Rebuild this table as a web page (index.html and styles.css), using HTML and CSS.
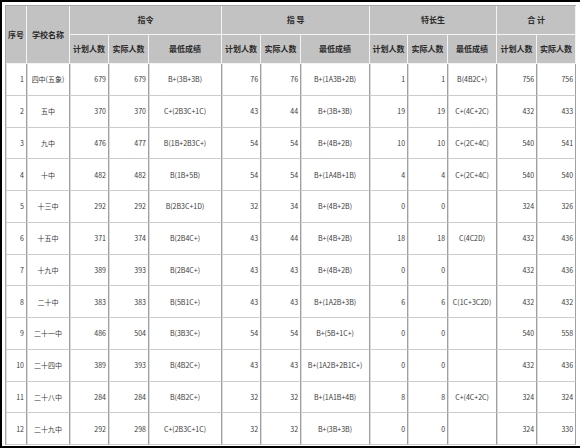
FILE: index.html
```html
<!DOCTYPE html>
<html lang="zh-CN">
<head>
<meta charset="utf-8">
<title>招生统计</title>
<link rel="stylesheet" href="styles.css">
</head>
<body>
<div class="frame">
<table class="grid">
<colgroup>
<col class="c-no"><col class="c-name">
<col class="c-n1"><col class="c-n2"><col class="c-s1">
<col class="c-n3"><col class="c-n4"><col class="c-s2">
<col class="c-n5"><col class="c-n6"><col class="c-s3">
<col class="c-n7"><col class="c-n8">
</colgroup>
<thead>
<tr class="h1">
<th rowspan="2">序号</th><th rowspan="2">学校名称</th>
<th colspan="3">指令</th><th colspan="3">指 导</th><th colspan="3">特长生</th><th colspan="2">合 计</th>
</tr>
<tr class="h2">
<th>计划人数</th><th>实际人数</th><th>最低成绩</th>
<th>计划人数</th><th>实际人数</th><th>最低成绩</th>
<th>计划人数</th><th>实际人数</th><th>最低成绩</th>
<th>计划人数</th><th>实际人数</th>
</tr>
</thead>
<tbody>
<tr><td class="r">1</td><td class="m">四中(五象)</td><td class="r">679</td><td class="r">679</td><td class="m">B+(3B+3B)</td><td class="r">76</td><td class="r">76</td><td class="m">B+(1A3B+2B)</td><td class="r">1</td><td class="r">1</td><td class="m">B(4B2C+)</td><td class="r">756</td><td class="r">756</td></tr>
<tr><td class="r">2</td><td class="m">五中</td><td class="r">370</td><td class="r">370</td><td class="m">C+(2B3C+1C)</td><td class="r">43</td><td class="r">44</td><td class="m">B+(3B+3B)</td><td class="r">19</td><td class="r">19</td><td class="m">C+(4C+2C)</td><td class="r">432</td><td class="r">433</td></tr>
<tr><td class="r">3</td><td class="m">九中</td><td class="r">476</td><td class="r">477</td><td class="m">B(1B+2B3C+)</td><td class="r">54</td><td class="r">54</td><td class="m">B+(4B+2B)</td><td class="r">10</td><td class="r">10</td><td class="m">C+(2C+4C)</td><td class="r">540</td><td class="r">541</td></tr>
<tr><td class="r">4</td><td class="m">十中</td><td class="r">482</td><td class="r">482</td><td class="m">B(1B+5B)</td><td class="r">54</td><td class="r">54</td><td class="m">B+(1A4B+1B)</td><td class="r">4</td><td class="r">4</td><td class="m">C+(2C+4C)</td><td class="r">540</td><td class="r">540</td></tr>
<tr><td class="r">5</td><td class="m">十三中</td><td class="r">292</td><td class="r">292</td><td class="m">B(2B3C+1D)</td><td class="r">32</td><td class="r">34</td><td class="m">B+(4B+2B)</td><td class="r">0</td><td class="r">0</td><td class="m"></td><td class="r">324</td><td class="r">326</td></tr>
<tr><td class="r">6</td><td class="m">十五中</td><td class="r">371</td><td class="r">374</td><td class="m">B(2B4C+)</td><td class="r">43</td><td class="r">44</td><td class="m">B+(4B+2B)</td><td class="r">18</td><td class="r">18</td><td class="m">C(4C2D)</td><td class="r">432</td><td class="r">436</td></tr>
<tr><td class="r">7</td><td class="m">十九中</td><td class="r">389</td><td class="r">393</td><td class="m">B(2B4C+)</td><td class="r">43</td><td class="r">43</td><td class="m">B+(4B+2B)</td><td class="r">0</td><td class="r">0</td><td class="m"></td><td class="r">432</td><td class="r">436</td></tr>
<tr><td class="r">8</td><td class="m">二十中</td><td class="r">383</td><td class="r">383</td><td class="m">B(5B1C+)</td><td class="r">43</td><td class="r">43</td><td class="m">B+(1A2B+3B)</td><td class="r">6</td><td class="r">6</td><td class="m">C(1C+3C2D)</td><td class="r">432</td><td class="r">432</td></tr>
<tr><td class="r">9</td><td class="m">二十一中</td><td class="r">486</td><td class="r">504</td><td class="m">B(3B3C+)</td><td class="r">54</td><td class="r">54</td><td class="m">B+(5B+1C+)</td><td class="r">0</td><td class="r">0</td><td class="m"></td><td class="r">540</td><td class="r">558</td></tr>
<tr><td class="r">10</td><td class="m">二十四中</td><td class="r">389</td><td class="r">393</td><td class="m">B(4B2C+)</td><td class="r">43</td><td class="r">43</td><td class="m">B+(1A2B+2B1C+)</td><td class="r">0</td><td class="r">0</td><td class="m"></td><td class="r">432</td><td class="r">436</td></tr>
<tr><td class="r">11</td><td class="m">二十八中</td><td class="r">284</td><td class="r">284</td><td class="m">B(4B2C+)</td><td class="r">32</td><td class="r">32</td><td class="m">B+(1A1B+4B)</td><td class="r">8</td><td class="r">8</td><td class="m">C+(4C+2C)</td><td class="r">324</td><td class="r">324</td></tr>
<tr><td class="r">12</td><td class="m">二十九中</td><td class="r">292</td><td class="r">298</td><td class="m">C+(2B3C+1C)</td><td class="r">32</td><td class="r">32</td><td class="m">B+(3B+3B)</td><td class="r">0</td><td class="r">0</td><td class="m"></td><td class="r">324</td><td class="r">330</td></tr>
</tbody>
</table>
</div>
</body>
</html>
```
FILE: styles.css
```css
html, body {
  margin: 0;
  padding: 0;
  background: #ffffff;
}
.frame {
  width: 580px;
  height: 448px;
  box-sizing: border-box;
  border-top: 2px solid #000;
  border-left: 2px solid #000;
  border-bottom: 2px solid #000;
  padding: 3px 0 0 3px;
  overflow: hidden;
  font-family: "Noto Sans CJK SC", "Microsoft YaHei", sans-serif;
  font-size: 8px;
  color: #333;
}
.grid {
  table-layout: fixed;
  width: 570px;
  border-collapse: separate;
  border-spacing: 0;
  border-top: 1px solid #a8a8a8;
  border-left: 1px solid #a8a8a8;
}
.c-no { width: 21px; }
.c-name { width: 43px; }
.c-n1 { width: 39px; }
.c-n2 { width: 40px; }
.c-s1 { width: 73px; }
.c-n3 { width: 39px; }
.c-n4 { width: 40px; }
.c-s2 { width: 69px; }
.c-n5 { width: 38px; }
.c-n6 { width: 40px; }
.c-s3 { width: 49px; }
.c-n7 { width: 40px; }
.c-n8 { width: 39px; }

.grid th {
  background: #c2c2c2;
  color: #2a2a2a;
  font-weight: bold;
  font-size: 8px;
  padding: 0;
  border-right: 1px solid #f4f4f4;
  border-bottom: 1px solid #f4f4f4;
  line-height: 10px;
  white-space: nowrap;
  overflow: hidden;
}
.h1 th { height: 28px; }
.h2 th { height: 28px; }
.grid td {
  height: 30.75px;
  padding: 0 2px 0 0;
  font-size: 7px;
  color: #3a3a3a;
  border-right: 1px solid #a0a0a0;
  border-bottom: 1px solid #cccccc;
  box-shadow: inset 1px 0 0 #dcdcdc;
  line-height: 10px;
  white-space: nowrap;
  overflow: hidden;
}
.grid td.r { text-align: right; }
.grid td.m { text-align: center; padding: 0; }
```
